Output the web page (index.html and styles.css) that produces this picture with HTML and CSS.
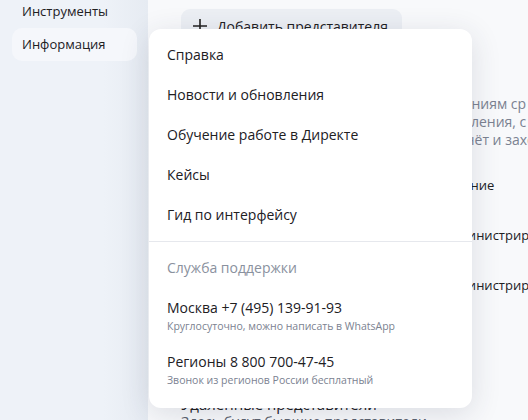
FILE: index.html
```html
<!DOCTYPE html>
<html lang="ru">
<head>
    <meta charset="UTF-8">
    <meta name="viewport" content="width=device-width, initial-scale=1.0">
    <title>Директ — Представители</title>
    <link rel="stylesheet" href="styles.css">
</head>
<body>
    <!-- Sidebar -->
    <aside class="sidebar">
        <a href="#" class="side-link">Инструменты</a>
        <a href="#" class="side-link active">Информация</a>
    </aside>

    <!-- Main content -->
    <main class="main">
        <button class="add-btn">
            <svg class="add-icon" width="14" height="14" viewBox="0 0 14 14">
                <path d="M7 0v14M0 7h14" stroke="#21201f" stroke-width="1.6"/>
            </svg>
            Добавить представителя
        </button>

        <p class="note">Представители получают доступы к кампаниям ср<br>аккаунта: вносят правки, запускают обновления, с<br>смотрят общую статистику, оплачивают счёт и захо</p>

        <div class="rows">
            <div class="row">Главный представитель: все права и управление</div>
            <div class="row">Представитель аккаунта — с правами на администрирование</div>
            <div class="row">Представитель аккаунта — с правами на администрирование</div>
        </div>

        <div class="removed-title">Удалённые представители</div>
        <div class="removed-text">Здесь будут бывшие представители</div>
    </main>

    <!-- Info menu -->
    <div class="menu">
        <a href="#" class="menu-item">Справка</a>
        <a href="#" class="menu-item">Новости и обновления</a>
        <a href="#" class="menu-item">Обучение работе в Директе</a>
        <a href="#" class="menu-item">Кейсы</a>
        <a href="#" class="menu-item">Гид по интерфейсу</a>
        <div class="menu-divider"></div>
        <div class="menu-heading">Служба поддержки</div>
        <a href="#" class="contact">
            <span class="contact-title">Москва +7 (495) 139-91-93</span>
            <span class="contact-hint">Круглосуточно, можно написать в WhatsApp</span>
        </a>
        <a href="#" class="contact">
            <span class="contact-title">Регионы 8 800 700-47-45</span>
            <span class="contact-hint">Звонок из регионов России бесплатный</span>
        </a>
    </div>
</body>
</html>
```

FILE: styles.css
```css
:root {
    --text-color: #21201f;
    --muted: #7b8291;
    --main-bg: #f8f9fb;
    --card-bg: #ffffff;
}

body {
    font-family: 'Open Sans', 'Noto Sans', sans-serif;
    margin: 0;
    height: 420px;
    overflow: hidden;
    display: flex;
    background-color: var(--main-bg);
    color: var(--text-color);
}

a {
    color: inherit;
    text-decoration: none;
}

/* Sidebar */
.sidebar {
    width: 148px;
    flex-shrink: 0;
    padding: 0 11px 0 12px;
    box-sizing: border-box;
    background: linear-gradient(to right, #eef2f8 70%, #e6ebf2);
    display: flex;
    flex-direction: column;
    margin-top: -5px;
}

.side-link {
    display: block;
    padding: 0 10px;
    height: 33px;
    line-height: 33px;
    font-size: 13px;
    border-radius: 10px;
}

.side-link.active {
    background-color: #f5f7fb;
}

/* Main */
.main {
    flex: 1;
    padding: 9px 0 0 33px;
    white-space: nowrap;
    overflow: hidden;
}

.add-btn {
    display: flex;
    align-items: center;
    gap: 10px;
    height: 34px;
    padding: 0 14px 0 12px;
    border: none;
    border-radius: 9px;
    background-color: #eceff4;
    font-family: inherit;
    font-size: 14px;
    color: var(--text-color);
}

.note {
    margin: 52px 0 0;
    font-size: 14px;
    line-height: 18px;
    color: var(--muted);
}

.rows {
    margin-top: 27px;
}

.row {
    font-size: 13px;
    line-height: 18px;
    height: 50px;
}

.removed-title {
    margin-top: 69px;
    font-size: 15px;
    line-height: 18px;
}

.removed-text {
    font-size: 14px;
    line-height: 18px;
    color: #5c6370;
}

/* Dropdown menu */
.menu {
    position: absolute;
    left: 149px;
    top: 29px;
    width: 323px;
    padding: 6px 0 12px;
    box-sizing: border-box;
    background-color: var(--card-bg);
    border-radius: 12px;
    box-shadow: 0 6px 30px rgba(40, 50, 80, 0.14);
}

.menu-item {
    display: block;
    padding: 0 18px;
    height: 40px;
    line-height: 40px;
    font-size: 14px;
}

.menu-divider {
    height: 1px;
    margin: 6px 0;
    background-color: #e6e8ed;
}

.menu-heading {
    padding: 0 18px;
    height: 40px;
    line-height: 40px;
    font-size: 14px;
    color: #8a919e;
}

.contact {
    display: flex;
    flex-direction: column;
    padding: 10px 18px 8px;
}

.contact-title {
    font-size: 14px;
    line-height: 20px;
}

.contact-hint {
    font-size: 10.5px;
    line-height: 16px;
    color: var(--muted);
}
```
